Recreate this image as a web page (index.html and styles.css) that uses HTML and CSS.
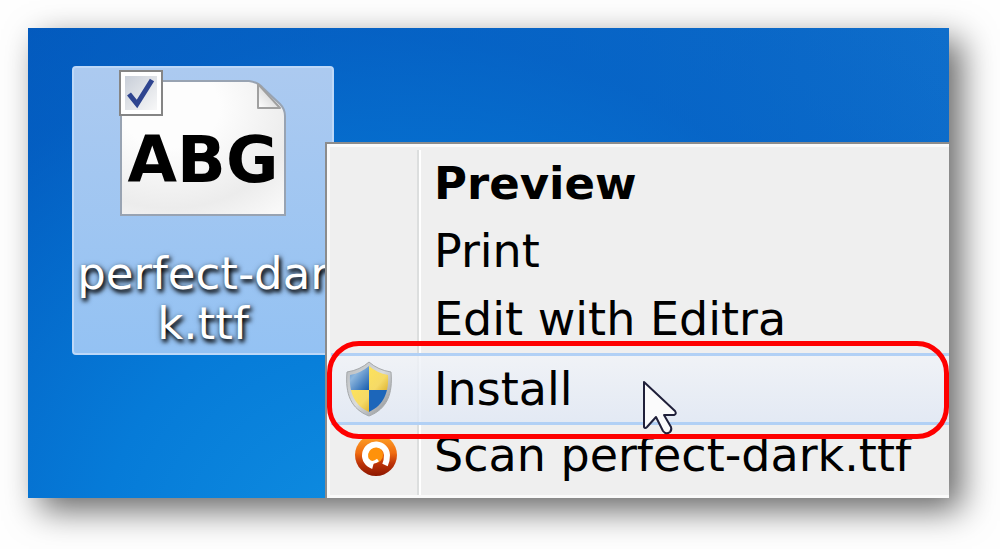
FILE: index.html
```html
<!DOCTYPE html>
<html lang="en">
  <head>
    <meta charset="UTF-8" />
    <meta name="viewport" content="width=device-width, initial-scale=1.0" />
    <title>Install font</title>

    <link rel="stylesheet" href="styles.css">
  </head>
  <body>
    <div class="desktop">
      <div class="file">
        <div class="thumb">
          <svg class="page" viewBox="0 0 168 138" aria-hidden="true">
            <defs>
              <radialGradient id="paper" cx="0.3" cy="0.2" r="1">
                <stop offset="0.3" stop-color="#fdfdfd" />
                <stop offset="0.75" stop-color="#ececec" />
                <stop offset="1" stop-color="#f8f8f8" />
              </radialGradient>
              <linearGradient id="fold" x1="0" y1="1" x2="0.7" y2="0.3">
                <stop offset="0" stop-color="#ffffff" />
                <stop offset="1" stop-color="#d4d4d4" />
              </linearGradient>
            </defs>
            <path d="M2 2H130Q139 3 144 9L161 25Q166 30 166 37V136H2Z" fill="url(#paper)" stroke="#98a3b2" stroke-width="2" />
            <path d="M139 5V29H161Z" fill="url(#fold)" stroke="#a0a0a0" stroke-width="2" stroke-linejoin="round" />
          </svg>
          <span class="sample">ABG</span>
          <input class="check" type="checkbox" id="file-check" checked />
          <svg class="tick" viewBox="0 0 44 46" aria-hidden="true">
            <path d="M10 24L18 34L33 10" fill="none" stroke="#2f4590" stroke-width="5" />
          </svg>
        </div>
        <label class="name" for="file-check">perfect-dark.ttf</label>
      </div>

      <ul class="menu">
        <li><button class="item default" type="button">Preview</button></li>
        <li><button class="item" type="button">Print</button></li>
        <li><button class="item" type="button">Edit with Editra</button></li>
        <li class="hot">
          <button class="item" type="button">
            <svg class="shield" viewBox="0 0 48 56" aria-hidden="true">
              <defs>
                <linearGradient id="rim" x1="0" y1="0" x2="1" y2="1">
                  <stop offset="0" stop-color="#b9bcbf" />
                  <stop offset="0.5" stop-color="#d9dbdc" />
                  <stop offset="1" stop-color="#85898d" />
                </linearGradient>
                <linearGradient id="blue" x1="0" y1="0" x2="1" y2="1">
                  <stop offset="0" stop-color="#2f73bd" />
                  <stop offset="0.45" stop-color="#8db6dd" />
                  <stop offset="1" stop-color="#145bae" />
                </linearGradient>
                <linearGradient id="gold" x1="0" y1="0" x2="1" y2="1">
                  <stop offset="0" stop-color="#ffe458" />
                  <stop offset="0.6" stop-color="#f5da67" />
                  <stop offset="1" stop-color="#d8aa25" />
                </linearGradient>
                <clipPath id="shape">
                  <path d="M24 5Q32 12 43 14C44 31 39 44 24 51C9 44 4 31 5 14Q16 12 24 5Z" />
                </clipPath>
              </defs>
              <path d="M24 1Q33 9 46 11C48 33 42 48 24 55C6 48 0 33 2 11Q15 9 24 1Z" fill="url(#rim)" stroke="#a5a8aa" />
              <g clip-path="url(#shape)">
                <rect width="24" height="29" fill="url(#blue)" />
                <rect x="24" width="24" height="29" fill="url(#gold)" />
                <rect y="29" width="24" height="27" fill="url(#gold)" />
                <rect x="24" y="29" width="24" height="27" fill="#1c66ba" />
              </g>
            </svg>
            Install
          </button>
          <span class="ring"></span>
          <svg class="cursor" viewBox="0 0 38 58" aria-hidden="true">
            <path d="M3 3V48Q4 50 6 48L15 38L22 52Q25 56 29 53Q31 51 30 48L23 36H33Q36 35 34 32Z" fill="#fbfbfc" stroke="#20203a" stroke-width="2" stroke-linejoin="round" />
          </svg>
        </li>
        <li>
          <button class="item" type="button">
            <svg class="scan" viewBox="0 0 44 44" aria-hidden="true">
              <defs>
                <linearGradient id="ball" x1="0" y1="0" x2="0" y2="1">
                  <stop offset="0" stop-color="#ffa82b" />
                  <stop offset="0.45" stop-color="#f06c10" />
                  <stop offset="0.7" stop-color="#bd3308" />
                  <stop offset="1" stop-color="#8d1700" />
                </linearGradient>
              </defs>
              <circle cx="22" cy="22" r="21" fill="url(#ball)" />
              <circle cx="21" cy="22" r="8" fill="#ff920b" />
              <path d="M19 33A11 11 0 1 1 33 22Q33 28 31 32" fill="none" stroke="#ffffff" stroke-width="6" />
              <path d="M14 27Q18 32 24 27" fill="none" stroke="#ffffff" stroke-width="3" />
            </svg>
            Scan perfect-dark.ttf
          </button>
        </li>
      </ul>
    </div>
  </body>
</html>
```
FILE: styles.css
```css
body {
  margin: 0;
  padding: 28px 51px 51px 28px;
  background-color: #fefefe;
  font-family: "DejaVu Sans", Verdana, sans-serif;
}

.desktop {
  display: grid;
  overflow: hidden;
  background: radial-gradient(ellipse at 38% 115%, #1090e2 0%, #067bd8 35%, rgba(4, 100, 200, 0.6) 70%, rgba(4, 100, 200, 0) 100%),
    linear-gradient(to right, #0355b8, #0f6ecb);
  box-shadow: 12px 12px 32px rgba(0, 0, 0, 0.6);
}

/* the context menu opens over the selected file */
.file,
.menu {
  grid-area: 1 / 1;
}

.file {
  align-self: start;
  width: 258px;
  margin: 38px 0 0 44px;
  padding-bottom: 4px;
  border: 2px solid #bdd8f8;
  border-radius: 4px;
  background: linear-gradient(#accaf0, #94c2f3);
}

.thumb {
  position: relative;
  display: grid;
  width: 168px;
  margin: 11px auto 32px 45px;
}

.page,
.sample {
  grid-area: 1 / 1;
}

.page {
  width: 168px;
  height: 138px;
}

.sample {
  align-self: center;
  padding-top: 24px;
  text-align: center;
  font-size: 64px;
  font-weight: bold;
  line-height: 64px;
  color: #000;
}

.check {
  position: absolute;
  left: 0;
  top: -9px;
  box-sizing: border-box;
  width: 44px;
  height: 46px;
  margin: 0;
  appearance: none;
  border: 2px solid #858585;
  background: linear-gradient(135deg, #c8ced8, #f8f8f8) center / 32px 34px no-repeat #fff;
}

.tick {
  position: absolute;
  left: 0;
  top: -9px;
  width: 44px;
  height: 46px;
  pointer-events: none;
}

.name {
  display: block;
  text-align: center;
  font-size: 45px;
  line-height: 50px;
  word-break: break-all;
  color: #fff;
  text-shadow: 2px 3px 4px #000, 1px 2px 6px rgba(0, 0, 0, 0.6);
}

.menu {
  margin: 114px 0 0 297px;
  padding: 5px 0 9px 4px;
  list-style: none;
  border-top: 2px solid #8c8c8c;
  border-left: 2px solid #8c8c8c;
  background: linear-gradient(to right, #dcdede 50%, #fff 50%) 90px 6px / 4px 100% no-repeat #efefef;
  box-shadow: inset 3px 3px #fafafa, inset 0 -3px #fafafa;
}

.item {
  position: relative;
  display: flex;
  align-items: center;
  width: 100%;
  height: 68px;
  padding: 0 0 0 103px;
  border: none;
  background: none;
  font-family: inherit;
  font-size: 46px;
  white-space: nowrap;
  color: #000;
}

.default {
  font-size: 45px;
  font-weight: bold;
}

.hot {
  position: relative;
  z-index: 1;
  margin-bottom: -4px;
}

.hot .item {
  height: 72px;
  border-top: 3px solid #b1d0f5;
  border-bottom: 3px solid #b1d0f5;
  background: linear-gradient(rgba(240, 243, 248, 0.8), rgba(224, 232, 245, 0.8));
}

.shield {
  position: absolute;
  left: 14px;
  width: 48px;
  height: 56px;
}

.scan {
  position: absolute;
  left: 23px;
  width: 44px;
  height: 44px;
}

.ring {
  position: absolute;
  inset: -12px 0 -14px -4px;
  border: 5px solid #fe0000;
  border-radius: 32px;
  pointer-events: none;
}

.cursor {
  position: absolute;
  left: 310px;
  top: 26px;
  width: 38px;
  height: 58px;
  pointer-events: none;
}
```
